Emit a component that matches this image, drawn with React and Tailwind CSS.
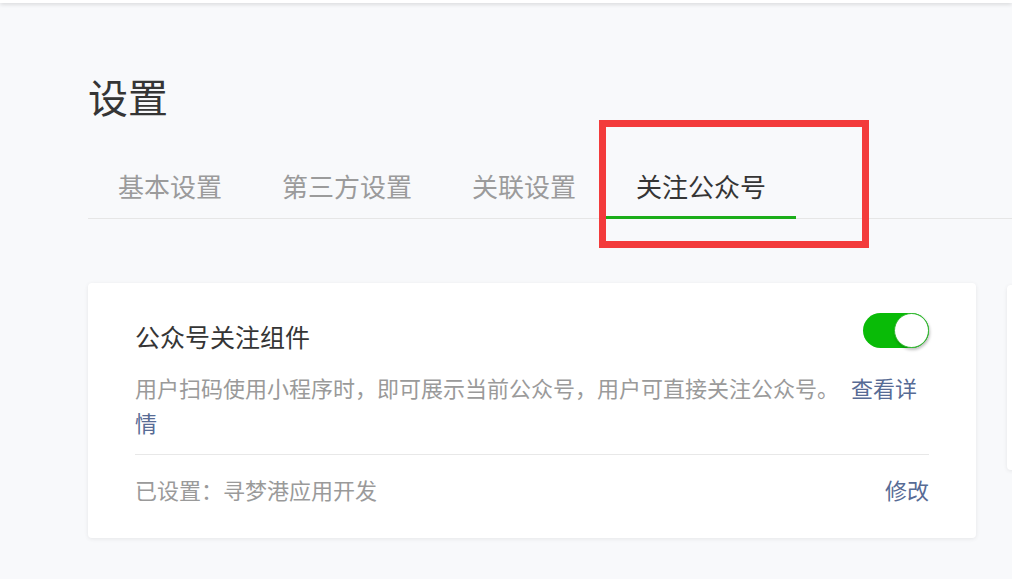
import React from "react";

const font = { fontFamily: '"Noto Sans CJK SC", "Noto Sans", sans-serif' };

function Tab({ label, active }) {
  return (
    <div
      className={`relative px-[30px] pb-[14px] text-[26px] leading-[36px] ${
        active ? "text-[#353535]" : "text-[#9b9b9b]"
      }`}
    >
      {label}
      {active && (
        <div className="absolute left-0 right-0 -bottom-[1px] h-[3px] bg-[#1aad19]" />
      )}
    </div>
  );
}

export default function App() {
  return (
    <div
      className="relative w-[1012px] h-[579px] overflow-hidden bg-[#f8f9fb]"
      style={font}
    >
      <div className="h-[3px] bg-white shadow-[0_1px_4px_rgba(0,0,0,0.18)]" />

      <div className="pl-[88px]">
        <h1 className="mt-[70px] text-[40px] leading-[46px] text-[#353535] font-normal">
          设置
        </h1>

        <div className="mt-[49px] flex border-b border-[#e6e6e6]">
          <Tab label="基本设置" />
          <Tab label="第三方设置" />
          <Tab label="关联设置" />
          <Tab label="关注公众号" active />
        </div>

        <div className="mt-[64px] flex gap-[31px]">
          <div className="w-[888px] shrink-0 rounded-[4px] bg-white px-[47px] pt-[30px] pb-[31px] shadow-[0_1px_4px_rgba(0,0,0,0.08)]">
            <div className="flex items-start justify-between">
              <div className="text-[25px] leading-[46px] text-[#353535]">
                公众号关注组件
              </div>
              <div className="relative h-[35px] w-[66px] rounded-full bg-[#09bb07]">
                <div className="absolute right-0 top-0 h-[35px] w-[35px] rounded-full border border-[#2fb82e] bg-white shadow-[1px_2px_3px_rgba(0,0,0,0.25)]" />
              </div>
            </div>
            <p className="mt-[11px] text-[22px] leading-[35px] text-[#9a9a9a]">
              用户扫码使用小程序时，即可展示当前公众号，用户可直接关注公众号。
              <span className="ml-[12px] text-[#576b95]">查看详情</span>
            </p>
            <div className="mt-[14px] h-px bg-[#e8e8e8]" />
            <div className="mt-[17px] flex justify-between text-[22px] leading-[35px]">
              <span className="text-[#9a9a9a]">已设置：寻梦港应用开发</span>
              <span className="text-[#576b95]">修改</span>
            </div>
          </div>
          <div className="mt-[2px] h-[185px] w-[300px] shrink-0 rounded-[4px] bg-white shadow-[0_1px_4px_rgba(0,0,0,0.08)]" />
        </div>
      </div>

      <div className="absolute left-[599px] top-[120px] h-[128px] w-[270px] border-[7px] border-[#f33b3b]" />
    </div>
  );
}
